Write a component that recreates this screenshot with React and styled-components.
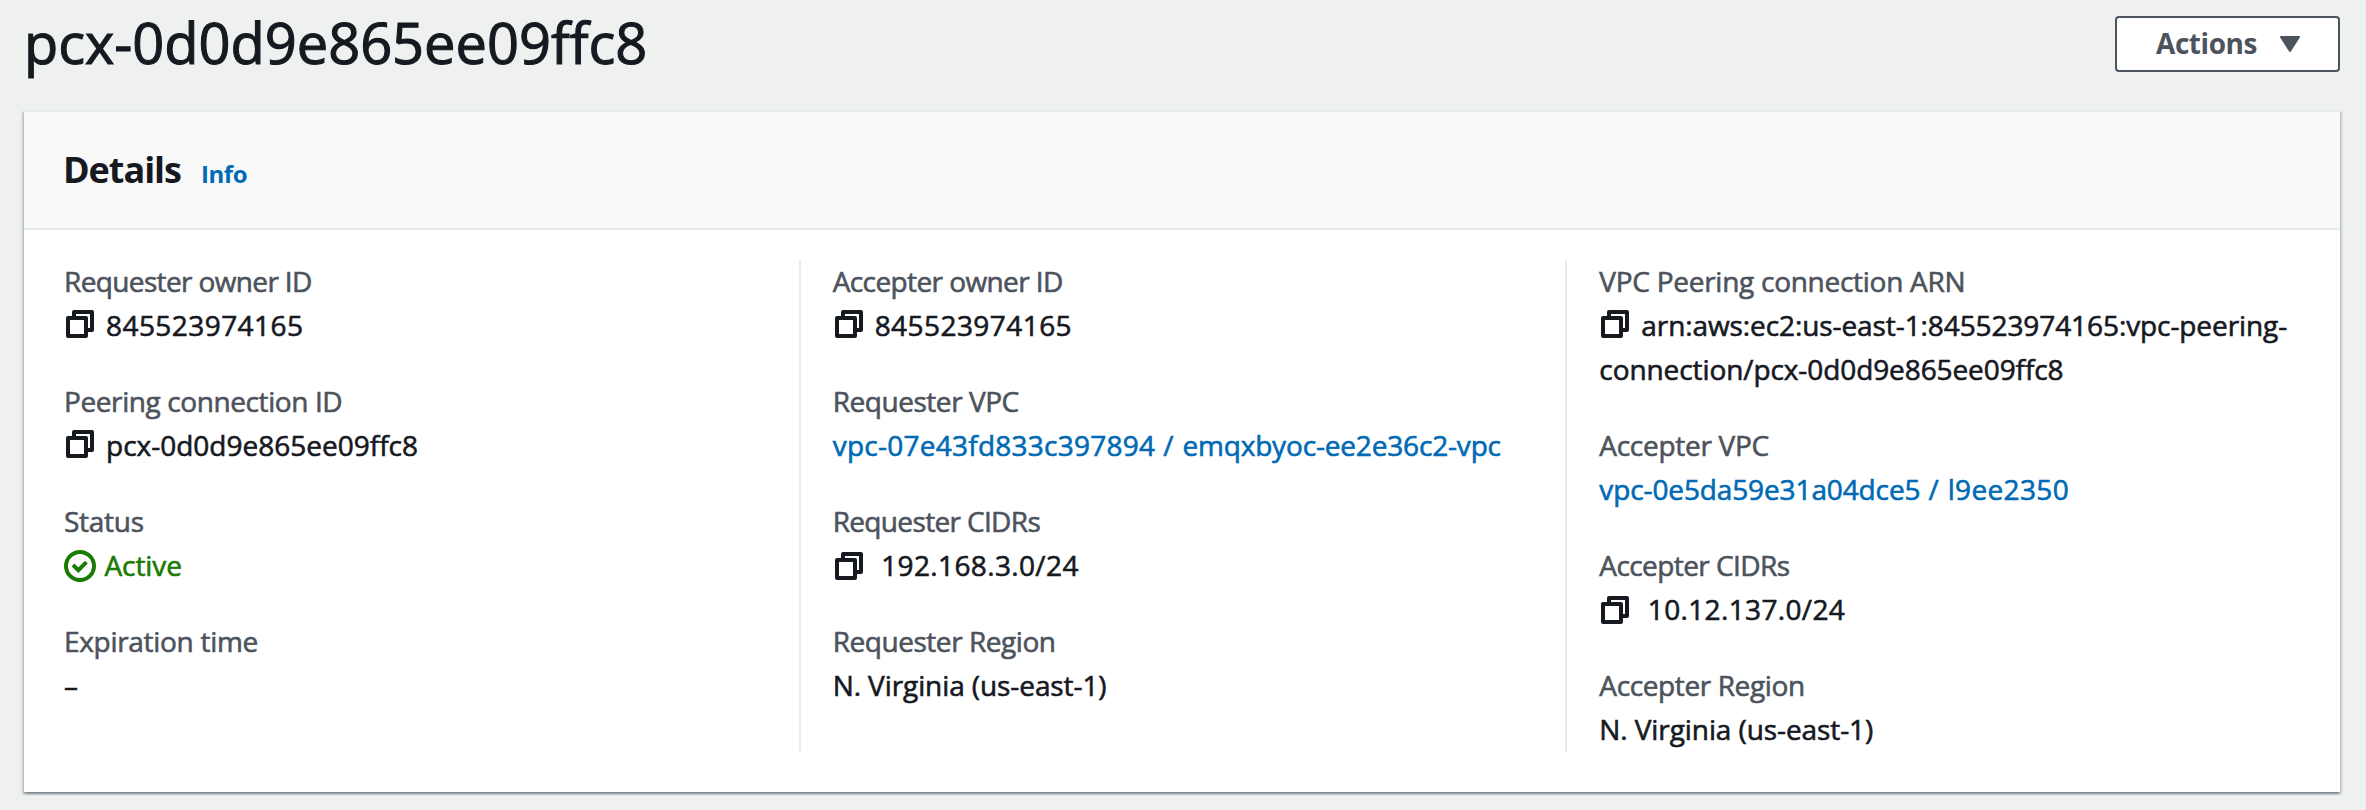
import React from 'react';
import styled, { createGlobalStyle } from 'styled-components';

const GlobalStyle = createGlobalStyle`
  * { box-sizing: border-box; }
  body {
    margin: 0;
    background: #eff1f1;
    color: #16191f;
    font-family: "Open Sans", "Noto Sans", sans-serif;
    font-size: 28px;
    line-height: 44px;
    -webkit-text-stroke: 0.6px currentColor;
  }
`;

const Page = styled.main`
  min-height: 810px;
  padding: 0 26px 18px 24px;
`;

const PageHeader = styled.header`
  display: flex;
  justify-content: space-between;
  align-items: flex-start;
  height: 110px;
  padding-top: 6px;
`;

const Title = styled.h1`
  margin: 0;
  font-size: 56px;
  font-weight: 400;
  line-height: 72px;
  letter-spacing: -0.03px;
  -webkit-text-stroke: 1.1px currentColor;
`;

const ActionsButton = styled.button`
  display: flex;
  align-items: flex-start;
  width: 225px;
  height: 56px;
  margin: 10px 0 0;
  padding: 6px 0 0 39px;
  border: 2px solid #4c535c;
  border-radius: 4px;
  background: #fff;
  color: #4c535c;
  font: 700 28px/38px "Open Sans", "Noto Sans", sans-serif;
  letter-spacing: -0.44px;
  -webkit-text-stroke: 0;

  svg {
    margin: 12px 0 0 23px;
  }
`;

const Card = styled.section`
  border-top: 2px solid #e8ebeb;
  background: #fff;
  box-shadow:
    0 2px 2px 0 rgba(0, 28, 36, 0.3),
    2px 2px 2px 0 rgba(0, 28, 36, 0.15),
    -2px 2px 2px 0 rgba(0, 28, 36, 0.15);
`;

const CardHeader = styled.div`
  display: flex;
  align-items: baseline;
  gap: 20px;
  height: 118px;
  padding: 36px 40px 0 39px;
  border-bottom: 2px solid #e8ebeb;
  background: #f9f9f9;
  -webkit-text-stroke: 0;
`;

const CardTitle = styled.h2`
  margin: 0;
  font-size: 36px;
  font-weight: 700;
  line-height: 44px;
  letter-spacing: -1.04px;
`;

const InfoLink = styled.a`
  color: #006ab4;
  font-size: 24px;
  font-weight: 700;
  letter-spacing: -0.37px;
`;

const Columns = styled.div`
  display: grid;
  grid-template-columns: repeat(3, 1fr);
  padding: 30px 8px 40px;
`;

const Column = styled.div`
  padding: 0 32px;

  & + & {
    border-left: 2px solid #e8ebeb;
  }
`;

const Fields = styled.dl`
  display: flex;
  flex-direction: column;
  gap: 32px;
  margin: -1px 0 1px;
`;

const Label = styled.dt`
  color: #4c535c;
  letter-spacing: ${(p) => p.$tracking}px;
`;

const Value = styled.dd`
  min-height: 44px;
  margin: 0;
  color: ${(p) => p.$color || '#16191f'};
  letter-spacing: ${(p) => p.$tracking}px;
`;

const Part = styled.span`
  letter-spacing: ${(p) => p.$tracking}px;
`;

const InlineIcon = styled.svg`
  width: 32px;
  height: 32px;
  margin: ${(p) => p.$top}px ${(p) => p.$gap}px 0 0;
  vertical-align: top;
`;

const CopyIcon = ({ top = 5, gap = 10 }) => (
  <InlineIcon viewBox="0 0 16 16" fill="none" stroke="#16191f" strokeWidth="2" strokeLinejoin="round" $top={top} $gap={gap}>
    <path d="M2 5h9v9H2z" />
    <path d="M5 5V2h9v9h-3" />
  </InlineIcon>
);

const SuccessIcon = () => (
  <InlineIcon viewBox="0 0 16 16" fill="none" stroke="#1a7a03" strokeWidth="2" $top={7} $gap={8.5}>
    <circle cx="8" cy="8" r="7" />
    <path d="m4.5 7.5 2.7 2.6 4-4" />
  </InlineIcon>
);

const LINK = '#006ab4';
const GREEN = '#1a7a03';

const columns = [
  [
    { label: 'Requester owner ID', lt: -0.63, value: '845523974165', vt: 0.44, icon: <CopyIcon /> },
    { label: 'Peering connection ID', lt: -0.4, value: 'pcx-0d0d9e865ee09ffc8', vt: 0.001, icon: <CopyIcon /> },
    { label: 'Status', lt: -0.27, value: 'Active', vt: -0.09, color: GREEN, icon: <SuccessIcon /> },
    { label: 'Expiration time', lt: -0.3, value: '–', vt: 0 },
  ],
  [
    { label: 'Accepter owner ID', lt: -0.59, value: '845523974165', vt: 0.44, icon: <CopyIcon /> },
    {
      label: 'Requester VPC',
      lt: -0.45,
      color: LINK,
      parts: [
        ['vpc-07e43fd833c397894', 0.25],
        [' / ', 0.77],
        ['emqxbyoc-ee2e36c2-vpc', -0.17],
      ],
    },
    { label: 'Requester CIDRs', lt: -0.65, value: '192.168.3.0/24', vt: 0.37, icon: <CopyIcon top={7} gap={16.5} /> },
    { label: 'Requester Region', lt: -0.45, value: 'N. Virginia (us-east-1)', vt: -0.09 },
  ],
  [
    {
      label: 'VPC Peering connection ARN',
      lt: -0.27,
      value: 'arn:aws:ec2:us-east-1:845523974165:vpc-peering-connection/pcx-0d0d9e865ee09ffc8',
      vt: -0.09,
      icon: <CopyIcon />,
    },
    {
      label: 'Accepter VPC',
      lt: -0.29,
      color: LINK,
      parts: [
        ['vpc-0e5da59e31a04dce5', -0.12],
        [' / ', 0.82],
        ['l9ee2350', 0.35],
      ],
    },
    { label: 'Accepter CIDRs', lt: -0.58, value: '10.12.137.0/24', vt: 0.35, icon: <CopyIcon top={7} gap={16.5} /> },
    { label: 'Accepter Region', lt: -0.38, value: 'N. Virginia (us-east-1)', vt: -0.09 },
  ],
];

export default function App() {
  return (
    <Page>
      <GlobalStyle />
      <PageHeader>
        <Title>pcx-0d0d9e865ee09ffc8</Title>
        <ActionsButton type="button">
          Actions
          <svg width="20" height="16" viewBox="0 0 20 16" fill="#4c535c" stroke="#4c535c" strokeWidth="2" strokeLinejoin="round">
            <path d="M1 1h18l-9 14z" />
          </svg>
        </ActionsButton>
      </PageHeader>
      <Card>
        <CardHeader>
          <CardTitle>Details</CardTitle>
          <InfoLink>Info</InfoLink>
        </CardHeader>
        <Columns>
          {columns.map((fields, i) => (
            <Column key={i}>
              <Fields>
                {fields.map((f) => (
                  <div key={f.label}>
                    <Label $tracking={f.lt}>{f.label}</Label>
                    <Value $tracking={f.vt || 0} $color={f.color}>
                      {f.icon}
                      {f.value}
                      {f.parts?.map(([text, tracking]) => (
                        <Part key={text} $tracking={tracking}>{text}</Part>
                      ))}
                    </Value>
                  </div>
                ))}
              </Fields>
            </Column>
          ))}
        </Columns>
      </Card>
    </Page>
  );
}
